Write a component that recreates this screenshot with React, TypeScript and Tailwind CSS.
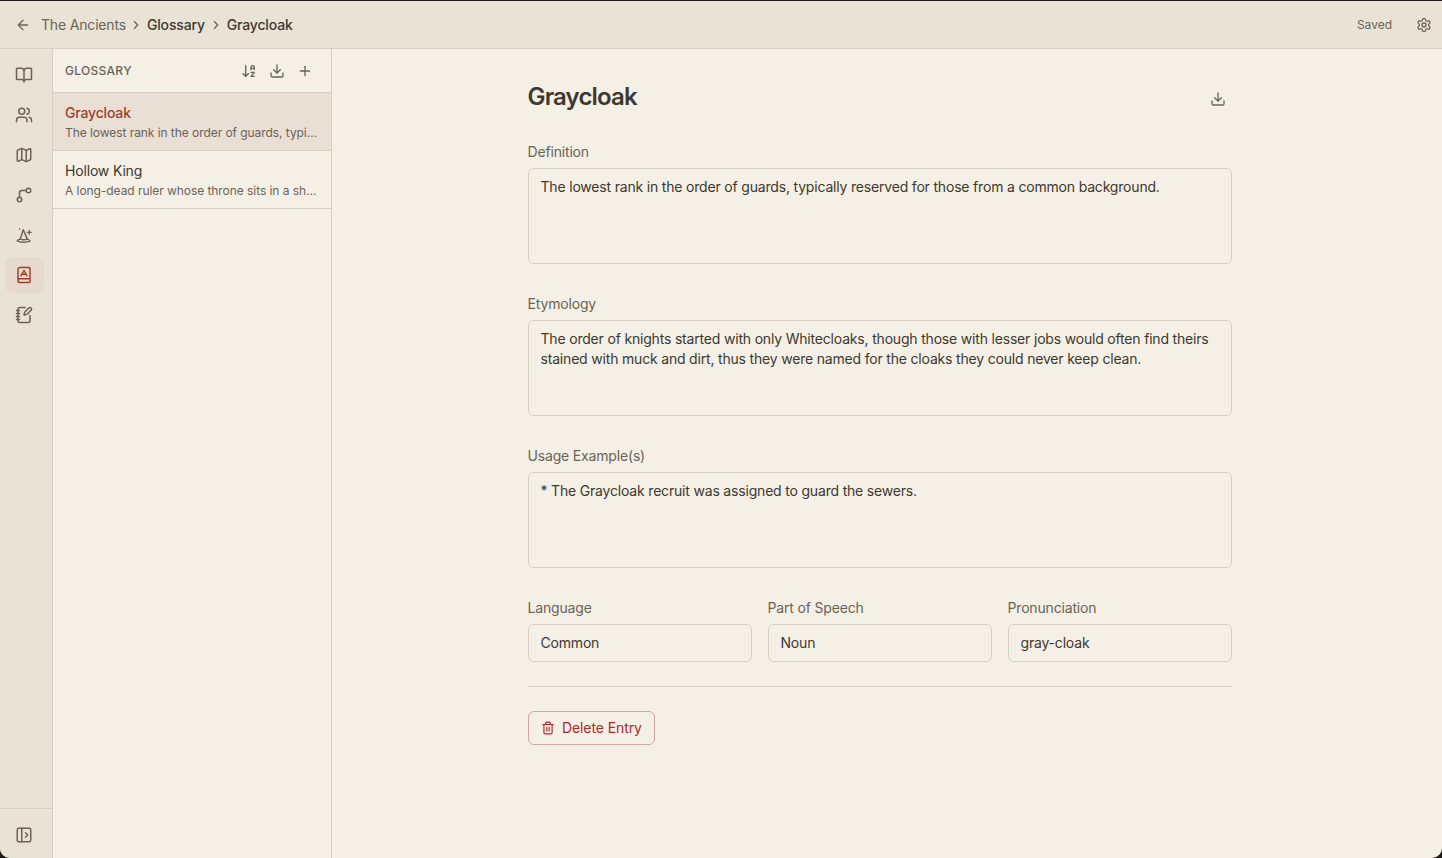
import { ArrowDownAZ, ArrowLeft, BookA, BookOpen, ChevronRight, Download, Map, NotebookPen, PanelLeftOpen, Plus, Settings, Trash2, Users } from "lucide-react";

function WizardHat({ size = 18 }: { size?: number }) {
  return (
    <svg width={size} height={size} viewBox="0 0 24 24" fill="none" stroke="currentColor" strokeWidth="2" strokeLinecap="round" strokeLinejoin="round">
      <path d="M7 17.500 11 5l5.500 12.500" />
      <path d="M7 17.500c2.500 1 7 1 9.500 0" />
      <path d="M7 17.500c-2 .4-3.500 1.200-4 2.500 1.500 1 5 1.500 8.500 1.500s7-.5 8.500-1.500c-.5-1.300-2-2.100-3.500-2.500" />
      <path d="M19 6v5M16.500 8.500h5" strokeWidth="1.800" />
      <path d="M6 4v.01" />
    </svg>
  );
}

function Branch({ size = 18 }: { size?: number }) {
  return (
    <svg width={size} height={size} viewBox="0 0 24 24" fill="none" stroke="currentColor" strokeWidth="2" strokeLinecap="round" strokeLinejoin="round">
      <circle cx="18" cy="6" r="3" />
      <circle cx="6" cy="18" r="3" />
      <path d="M6 15V9a3 3 0 0 1 3-3h6" />
    </svg>
  );
}

const nav = [BookOpen, Users, Map, Branch, WizardHat, BookA, NotebookPen];

const areas = [
  { label: "Definition", value: "The lowest rank in the order of guards, typically reserved for those from a common background." },
  { label: "Etymology", value: "The order of knights started with only Whitecloaks, though those with lesser jobs would often find theirs stained with muck and dirt, thus they were named for the cloaks they could never keep clean." },
  { label: "Usage Example(s)", value: "* The Graycloak recruit was assigned to guard the sewers." },
];

const fields = [
  { label: "Language", value: "Common" },
  { label: "Part of Speech", value: "Noun" },
  { label: "Pronunciation", value: "gray-cloak" },
];

const entries = [
  { title: "Graycloak", desc: "The lowest rank in the order of guards, typically reserved for those from a common background.", active: true },
  { title: "Hollow King", desc: "A long-dead ruler whose throne sits in a shattered hall beneath the mountain.", active: false },
];

export default function App() {
  return (
    <div className="h-[858px] w-[1442px] overflow-hidden bg-[#1d1b16] pt-px font-['Inter',sans-serif] text-[#3d3830]">
      <div className="flex h-[857px] flex-col overflow-hidden rounded-b-[10px] bg-[#f5f0e5]">
        <header className="flex h-[48px] shrink-0 items-center justify-between border-b border-[#d6d0c4] bg-[#e9e3d6] pl-[15px] pr-[10px]">
          <div className="flex items-center text-sm tracking-[-0.17px]">
            <ArrowLeft size={16} className="text-[#6b6358]" />
            <span className="ml-[10px] text-[#6b6358]">The Ancients</span>
            <ChevronRight size={14} className="mx-[3.500px] text-[#6b6358]" />
            <span className="font-medium text-[#3d3830]">Glossary</span>
            <ChevronRight size={14} className="mx-[4px] text-[#6b6358]" />
            <span className="font-medium text-[#3d3830]">Graycloak</span>
          </div>
          <div className="flex items-center gap-[24px]">
            <span className="text-xs text-[#6b6358]">Saved</span>
            <Settings size={16} className="text-[#6b6358]" />
          </div>
        </header>
        <div className="flex min-h-0 flex-1">
          <aside className="flex w-[53px] shrink-0 flex-col justify-between border-r border-[#d6d0c4] bg-[#e9e3d6]">
            <nav className="flex flex-col gap-[4px] pl-[5px] pt-[8px]">
              {nav.map((Icon, i) => (
                <div key={i} className={`flex h-[36px] w-[39px] items-center justify-center rounded-lg pr-px ${i === 5 ? "bg-[#e6d9ce] text-[#a0402c]" : "text-[#6b6358]"}`}>
                  <Icon size={18} />
                </div>
              ))}
            </nav>
            <div className="flex h-[50px] items-start border-t border-[#d6d0c4] pl-[5px] pt-[8px]">
              <div className="flex h-[36px] w-[39px] items-center justify-center pr-px text-[#6b6358]">
                <PanelLeftOpen size={18} />
              </div>
            </div>
          </aside>
          <section className="w-[279px] shrink-0 border-r border-[#d6d0c4]">
            <div className="flex h-[44px] items-center justify-between border-b border-[#d6d0c4] pl-[12px] pr-[18px]">
              <span className="text-xs font-medium tracking-[0.3px] text-[#6b6358]">GLOSSARY</span>
              <div className="flex items-center gap-[12px] text-[#6b6358]">
                <ArrowDownAZ size={16} />
                <Download size={16} />
                <Plus size={16} />
              </div>
            </div>
            {entries.map((e) => (
              <div key={e.title} className={`flex h-[58px] flex-col justify-center border-b border-[#d6d0c4] px-[12px] pt-[2px] ${e.active ? "bg-[#e9dfd4]" : ""}`}>
                <div className={`text-sm leading-[20px] tracking-[-0.17px] ${e.active ? "font-medium text-[#a0402c]" : "text-[#3d3830]"}`}>{e.title}</div>
                <div className="mt-px truncate text-xs leading-[18px] tracking-[-0.06px] text-[#6b6358]">{e.desc}</div>
              </div>
            ))}
          </section>
          <main className="min-w-0 flex-1 pr-[14px]">
            <div className="mx-auto w-[704px] pt-[32px]">
              <div className="flex h-[32px] items-center justify-between">
                <h1 className="-ml-[0.500px] text-2xl font-semibold tracking-[-0.85px] text-[#3d3830]">Graycloak</h1>
                <Download size={16} className="mr-[6px] mt-[4px] text-[#6b6358]" />
              </div>
              <div className="mt-[29px] flex flex-col gap-[30px]">
                {areas.map((a) => (
                  <div key={a.label}>
                    <label className="-ml-[0.500px] mb-[6px] block text-sm leading-[20px] tracking-[-0.17px] text-[#6b6358]">{a.label}</label>
                    <textarea
                      readOnly
                      value={a.value}
                      className="block h-[96px] w-full resize-none rounded-md border border-[#d6d0c4] bg-transparent py-[8px] pl-[11.500px] pr-[12px] text-sm leading-[20px] tracking-[-0.185px] text-[#3d3830] outline-none"
                    />
                  </div>
                ))}
                <div className="grid grid-cols-3 gap-[16px]">
                  {fields.map((f) => (
                    <div key={f.label}>
                      <label className="-ml-[0.500px] mb-[6px] block text-sm leading-[20px] tracking-[-0.17px] text-[#6b6358]">{f.label}</label>
                      <input
                        readOnly
                        value={f.value}
                        className="block h-[38px] w-full rounded-md border border-[#d6d0c4] bg-transparent pb-px pl-[11.500px] pr-[12px] text-sm tracking-[-0.185px] text-[#3d3830] outline-none"
                      />
                    </div>
                  ))}
                </div>
              </div>
              <div className="mt-[24px] border-t border-[#d6d0c4] pt-[24px]">
                <button className="flex h-[34px] items-center gap-[7px] rounded-md border border-[#d9a5a0] px-[12px] text-sm tracking-[-0.1px] text-[#b3262b]">
                  <Trash2 size={14} />
                  Delete Entry
                </button>
              </div>
            </div>
          </main>
        </div>
      </div>
    </div>
  );
}
